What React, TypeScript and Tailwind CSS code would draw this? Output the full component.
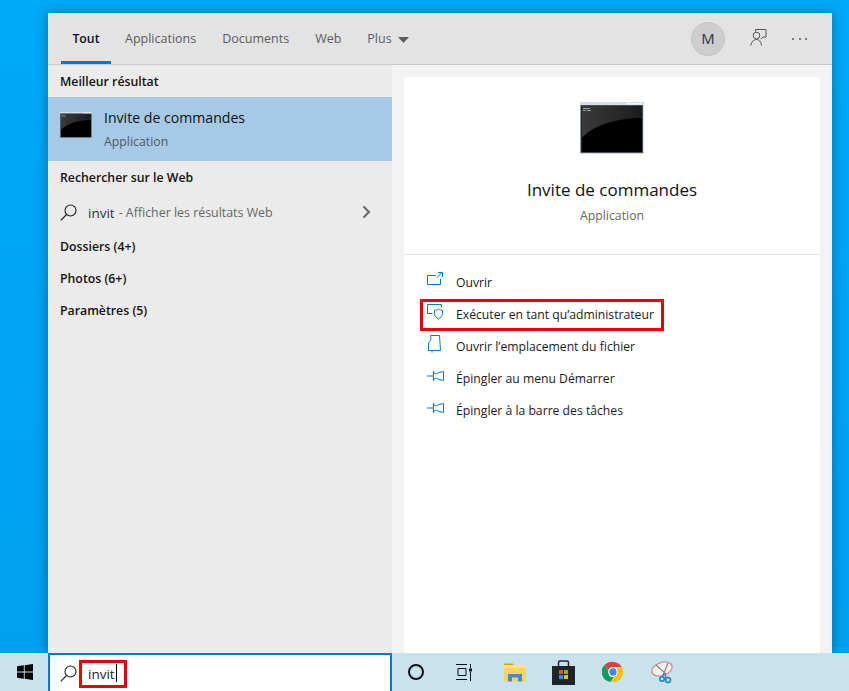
import React from "react";

const font = { fontFamily: '"Open Sans", "Noto Sans", sans-serif' };

function CmdIcon({ big }: { big?: boolean }) {
  const id = big ? "gb" : "gs";
  return (
    <svg width={big ? 64 : 32} height={big ? 52 : 26} viewBox="0 0 64 52" className="block">
      <defs>
        <linearGradient id={id} x1="0" y1="0" x2="1" y2="0">
          <stop offset="0" stopColor="#3a3a3a" />
          <stop offset="1" stopColor="#1c1c1c" />
        </linearGradient>
      </defs>
      <rect x="0" y="0" width="64" height="52" fill="#d9dee6" />
      <rect x="1" y="3.500" width="61.500" height="47" fill="#000" stroke="#44505f" strokeWidth="1" />
      <path d="M2 4 H62 V16 C 36 16 12 24 2 36 Z" fill={`url(#${id})`} />
      <path d="M3 6.500 h7 M3 8.500 h3 M7 8.500 h4" stroke="#bdbdbd" strokeWidth="0.800" />
      <rect x="46" y="1" width="16" height="1.500" fill="#f2f4f7" />
    </svg>
  );
}

function SearchIcon({ size = 17, color = "#1a1a1a" }: { size?: number; color?: string }) {
  return (
    <svg width={size} height={size} viewBox="0 0 17 17" fill="none" stroke={color} strokeWidth="1.100">
      <circle cx="10.500" cy="6.500" r="5.500" />
      <path d="M6.500 10.500 L0.800 16.300" />
    </svg>
  );
}

const blue = "#0078d7";

function OpenIcon() {
  return (
    <svg width="16" height="16" viewBox="0 0 16 16" fill="none" stroke={blue} strokeWidth="1">
      <path d="M9 3.500 H0.500 V12.500 H13.500 V7" />
      <path d="M10 5.500 L15 0.500 M11 0.500 H15.500 V5" />
    </svg>
  );
}
function AdminIcon() {
  return (
    <svg width="18" height="16" viewBox="0 0 18 16" fill="none" stroke={blue} strokeWidth="1">
      <path d="M5.500 9.500 H0.500 V0.500 H14.500 V3.500" />
      <path d="M11.500 5 C10.500 6 8.500 6.300 7.500 6.300 V9.500 C7.500 12 9.500 14 11.500 15 C13.500 14 15.500 12 15.500 9.500 V6.300 C14.500 6.300 12.500 6 11.500 5 Z" />
    </svg>
  );
}
function FileIcon() {
  return (
    <svg width="16" height="18" viewBox="0 0 16 18" fill="none" stroke={blue} strokeWidth="1">
      <path d="M3.500 0.500 H12.500 L13.500 15.500 H5 V17.500 M3.500 0.500 C4.500 4 3.500 6 1.500 8 V15.500 H5" />
    </svg>
  );
}
function PinIcon() {
  return (
    <svg width="17" height="12" viewBox="0 0 17 12" fill="none" stroke={blue} strokeWidth="1">
      <path d="M0 6 H6 M6.500 1 V11 M6.500 2.500 C9 4 10 4 12 2.500 L16.500 1.500 V10.500 L12 9.500 C10 8 9 8 6.500 9.500" />
    </svg>
  );
}

function Action({ icon, label }: { icon: React.ReactNode; label: string }) {
  return (
    <div className="flex h-8 items-center">
      <div className="flex h-full w-[52px] -translate-y-[3px] items-center pl-[23px]">{icon}</div>
      <span className="text-[12.200px] text-[#1a1a1a]">{label}</span>
    </div>
  );
}

function Section({ children, shift }: { children: React.ReactNode; shift?: boolean }) {
  return (
    <div className={`flex h-8 items-center pl-3 text-[12.300px] font-semibold text-[#111] ${shift ? "pt-[2px]" : ""}`}>
      {children}
    </div>
  );
}

export default function App() {
  return (
    <div
      style={font}
      className="relative flex h-[691px] w-[849px] flex-col overflow-hidden bg-gradient-to-b from-[#00aaf8] to-[#00a0ee]"
    >
      <div className="flex min-h-0 flex-1 pl-12 pr-[17px] pt-[13px]">
        <div className="flex min-w-0 flex-1 flex-col bg-[#f3f3f3] shadow-[0_0_12px_rgba(0,40,80,0.45)]">
          <header className="flex h-[52px] items-stretch border-b border-[#c8c8c8] bg-[#e3e3e3] pl-3">
            <div className="relative flex w-[50px] items-center justify-center pt-[2px] pl-[2px] text-[12.300px] font-semibold text-[#111]">
              Tout
              <div className="absolute bottom-0 left-[1px] right-[-1px] h-[3px] bg-[#0078d7]" />
            </div>
            <div className="flex flex-1 items-center pt-[2px] text-[12.500px] text-[#5c5c5c]">
              <span className="ml-[15px]">Applications</span>
              <span className="ml-[26px]">Documents</span>
              <span className="ml-[26px]">Web</span>
              <span className="ml-[26px]">Plus</span>
              <svg width="11" height="6" viewBox="0 0 11 6" className="ml-[6px]">
                <path d="M0 0 H11 L5.500 6 Z" fill="#5c5c5c" />
              </svg>
            </div>
            <div className="flex items-center pr-[13px]">
              <div className="flex h-[34px] w-[34px] items-center justify-center rounded-full border border-[#c4c4c4] bg-[#cdcdcd] text-[15px] text-[#333]">
                M
              </div>
              <svg width="17" height="17" viewBox="0 0 17 17" fill="none" stroke="#555" strokeWidth="1" className="ml-[25px] -translate-y-[1px]">
                <path d="M5.500 2.500 V0.500 H16 V8 H13 L11 10" />
                <circle cx="6.500" cy="6.500" r="3.300" />
                <path d="M0.800 16.500 C1.500 12.500 4 10.500 6.500 10.500 C9 10.500 11 12.500 11.500 16.500" />
              </svg>
              <div className="ml-[25px] mr-3 flex w-[15px] justify-between">
                <span className="h-[2px] w-[2px] rounded-full bg-[#555]" />
                <span className="h-[2px] w-[2px] rounded-full bg-[#555]" />
                <span className="h-[2px] w-[2px] rounded-full bg-[#555]" />
              </div>
            </div>
          </header>
          <div className="flex min-h-0 flex-1">
            <aside className="w-[344px] bg-[#ebebeb]">
              <Section shift>Meilleur résultat</Section>
              <div className="flex h-16 items-center bg-[#a6c9e5] pl-3">
                <div className="-translate-y-1">
                  <CmdIcon />
                </div>
                <div className="ml-3 flex flex-col">
                  <span className="text-[14.100px] leading-[20px] text-[#111]">
                    <span className="font-medium">Invit</span>e de commandes
                  </span>
                  <span className="mt-[5px] text-[12.300px] leading-[18px] text-[#4f5b66]">Application</span>
                </div>
              </div>
              <Section shift>Rechercher sur le Web</Section>
              <div className="flex h-[38px] items-center pl-3 pr-[21px]">
                <SearchIcon />
                <span className="ml-[11px] pt-[2px] text-[13.500px] text-[#333]">invit</span>
                <span className="ml-[4px] pt-[2px] text-[12.400px] text-[#666]">- Afficher les résultats Web</span>
                <svg width="9" height="14" viewBox="0 0 9 14" fill="none" stroke="#666" strokeWidth="2" className="ml-auto">
                  <path d="M1.500 1.500 L7 7 L1.500 12.500" />
                </svg>
              </div>
              <Section>Dossiers (4+)</Section>
              <Section>Photos (6+)</Section>
              <Section>Paramètres (5)</Section>
            </aside>
            <main className="flex min-w-0 flex-1 flex-col px-3 pt-3">
              <div className="flex flex-1 flex-col bg-white">
                <div className="flex h-[178px] flex-col items-center border-b border-[#e6e6e6]">
                  <div className="mt-[25px]">
                    <CmdIcon big />
                  </div>
                  <div className="mt-[24px] text-[17px] leading-[24px] text-[#111]">Invite de commandes</div>
                  <div className="mt-[5px] text-[12.300px] leading-[18px] text-[#666]">Application</div>
                </div>
                <div className="pt-[12px]">
                  <Action icon={<OpenIcon />} label="Ouvrir" />
                  <div className="relative">
                    <Action icon={<AdminIcon />} label="Exécuter en tant qu’administrateur" />
                    <div className="pointer-events-none absolute left-[16px] top-0 h-[32px] w-[244px] border-[3px] border-[#f00000]" />
                  </div>
                  <Action icon={<FileIcon />} label="Ouvrir l’emplacement du fichier" />
                  <Action icon={<PinIcon />} label="Épingler au menu Démarrer" />
                  <Action icon={<PinIcon />} label="Épingler à la barre des tâches" />
                </div>
              </div>
            </main>
          </div>
        </div>
      </div>
      <footer className="flex h-[38px] items-stretch bg-[#c9e3ee]">
        <div className="flex w-12 items-center justify-center pl-[1px]">
          <svg width="16" height="16" viewBox="0 0 16 16" fill="#000">
            <path d="M0 2.300 L6.800 1.300 V7.500 H0 Z M7.700 1.200 L16 0 V7.500 H7.700 Z M0 8.500 H6.800 V14.700 L0 13.700 Z M7.700 8.500 H16 V16 L7.700 14.800 Z" />
          </svg>
        </div>
        <div className="relative flex w-[344px] items-center border-2 border-b-0 border-[#0078d7] bg-white pl-[10px]">
          <SearchIcon size={17} color="#222" />
          <span className="ml-[11px] pt-[2px] text-[13.500px] text-[#222]">invit</span>
          <span className="ml-[1px] h-[18px] w-px bg-black" />
          <div className="pointer-events-none absolute left-[29px] top-[5px] h-[28px] w-[48px] border-[3px] border-[#f00000]" />
        </div>
        <div className="flex items-center">
          <div className="ml-[16px] h-[16px] w-[16px] rounded-full border-[2.500px] border-[#111]" />
          <svg width="17" height="17" viewBox="0 0 17 17" fill="none" stroke="#111" strokeWidth="1" className="ml-[32px]">
            <path d="M0 0.500 H11 M2 4.500 H10 V11.500 H2 Z M0 15.500 H11 M14.500 0 V4 M14.500 8 V17" />
            <rect x="13" y="4.500" width="3" height="3" fill="#111" stroke="none" />
          </svg>
          <svg width="22" height="19" viewBox="0 0 22 19" className="ml-[31px]">
            <path d="M0 0.500 H9 L10 2 H0 Z" fill="#d8a100" />
            <path d="M0 2 H22 V18.500 H0 Z" fill="#f6d55c" />
            <path d="M0 2 H22 V5 H0 Z" fill="#ffe38a" />
            <path d="M4 11 H18 V18.500 H14 V14.500 H8 V18.500 H4 Z" fill="#3a8fd6" />
          </svg>
          <svg width="23" height="25" viewBox="0 0 23 25" className="ml-[26px]">
            <path d="M6.500 6 V2.500 Q6.500 1 8 1 H15 Q16.500 1 16.500 2.500 V6" fill="none" stroke="#1f2428" strokeWidth="1.500" />
            <rect x="0" y="6" width="23" height="19" fill="#1f2428" />
            <rect x="7" y="10" width="4" height="4" fill="#f25022" />
            <rect x="12" y="10" width="4" height="4" fill="#7fba00" />
            <rect x="7" y="15" width="4" height="4" fill="#00a4ef" />
            <rect x="12" y="15" width="4" height="4" fill="#ffb900" />
          </svg>
          <svg width="22" height="22" viewBox="0 0 48 48" className="ml-[27px]">
            <path d="M24 2 A22 22 0 0 1 43 13 H24 A11 11 0 0 0 13.500 20.500 L6 8 A22 22 0 0 1 24 2 Z" fill="#db4437" />
            <path d="M6 8 L15 24 A9 9 0 0 0 26 35 L19 45.500 A22 22 0 0 1 6 8 Z" fill="#0f9d58" />
            <path d="M43 13 A22 22 0 0 1 21 46 L32 27 A10 10 0 0 0 31 17 Z" fill="#f4c20d" />
            <circle cx="24" cy="24" r="10.500" fill="#fff" />
            <circle cx="24" cy="24" r="8" fill="#4285f4" />
          </svg>
          <svg width="24" height="24" viewBox="0 0 24 24" fill="none" className="ml-[27px]">
            <ellipse cx="11" cy="9" rx="10.500" ry="6.500" transform="rotate(-20 11 9)" fill="#f7eeee" stroke="#d98a8a" strokeWidth="1.300" />
            <path d="M5 5 L14 13 M17 3 L13 13" stroke="#888" strokeWidth="1.200" />
            <path d="M14 13 L15 18 M13 13 L11 17" stroke="#1e7fc4" strokeWidth="1.300" />
            <circle cx="17" cy="20" r="2.500" stroke="#1e7fc4" strokeWidth="1.500" />
            <circle cx="11" cy="19" r="2.200" stroke="#1e7fc4" strokeWidth="1.500" />
          </svg>
        </div>
      </footer>
    </div>
  );
}
